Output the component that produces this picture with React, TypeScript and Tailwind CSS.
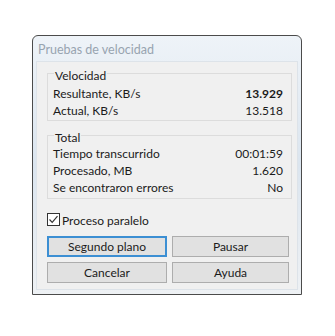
import React from "react";

const font = { fontFamily: 'Lato, "Noto Sans", Arial, sans-serif' };

function Row({ label, value, bold }: { label: string; value: string; bold?: boolean }) {
  return (
    <div className="flex h-[17px] items-center justify-between pt-[3px]">
      <span>{label}</span>
      <span className={bold ? "font-bold" : ""}>{value}</span>
    </div>
  );
}

function Group({ title, children, className }: { title: string; children: React.ReactNode; className?: string }) {
  return (
    <div className={"relative border border-[#dcdcdc] pl-[5px] pr-[8px] " + (className ?? "")}>
      <span className="absolute left-[6px] top-[-6px] bg-[#f0f0f0] px-[1px] leading-[15px]">{title}</span>
      {children}
    </div>
  );
}

function Btn({ children, focused }: { children: React.ReactNode; focused?: boolean }) {
  return (
    <div
      className={
        "flex h-[21px] items-center justify-center bg-[#e1e1e1] pt-[1px] " +
        (focused ? "border-2 border-[#3c8fd3]" : "border border-[#adadad]")
      }
    >
      {children}
    </div>
  );
}

export default function App() {
  return (
    <div className="h-[336px] w-[335px] bg-white pl-[32px] pt-[35px]" style={font}>
      <div className="flex h-[260px] w-[270px] flex-col rounded-t-[6px] border border-[#4b4b4b] bg-gradient-to-b from-[#eef3f8] via-[#dbe5ef] to-[#eef1f4]">
        <div className="flex h-[25px] items-center pl-[5px] pt-[3px] text-[12.5px] text-[#98a4b0]">Pruebas de velocidad</div>
        <div className="flex flex-1 flex-col px-[3px] pb-[4px]">
          <div className="flex flex-1 flex-col border border-[#dde3e9] bg-[#f0f0f0] pl-[10px] pr-[5px] pt-[11px] text-[12px] text-[#1b1b1b]">
            <Group title="Velocidad" className="pb-[2px] pt-[10px]">
              <Row label="Resultante, KB/s" value="13.929" bold />
              <Row label="Actual, KB/s" value="13.518" />
            </Group>
            <Group title="Total" className="mt-[14px] pb-[3px] pt-[8px]">
              <Row label="Tiempo transcurrido" value="00:01:59" />
              <Row label="Procesado, MB" value="1.620" />
              <Row label="Se encontraron errores" value="No" />
            </Group>
            <div className="mt-[14px] flex h-[13px] items-center gap-[2px]">
              <div className="flex h-[13px] w-[13px] items-center justify-center border border-[#333333] bg-white">
                <svg width="11" height="11" viewBox="0 0 11 11">
                  <path d="M1.5 5.5 L4.2 8.3 L9.5 2.2" fill="none" stroke="#333" strokeWidth="1.2" />
                </svg>
              </div>
              <span className="pt-[2px]">Proceso paralelo</span>
            </div>
            <div className="mt-[10px] grid grid-cols-[120px_117px] gap-x-[5px] gap-y-[5px]">
              <Btn focused>Segundo plano</Btn>
              <Btn>Pausar</Btn>
              <Btn>Cancelar</Btn>
              <Btn>Ayuda</Btn>
            </div>
          </div>
        </div>
      </div>
    </div>
  );
}
